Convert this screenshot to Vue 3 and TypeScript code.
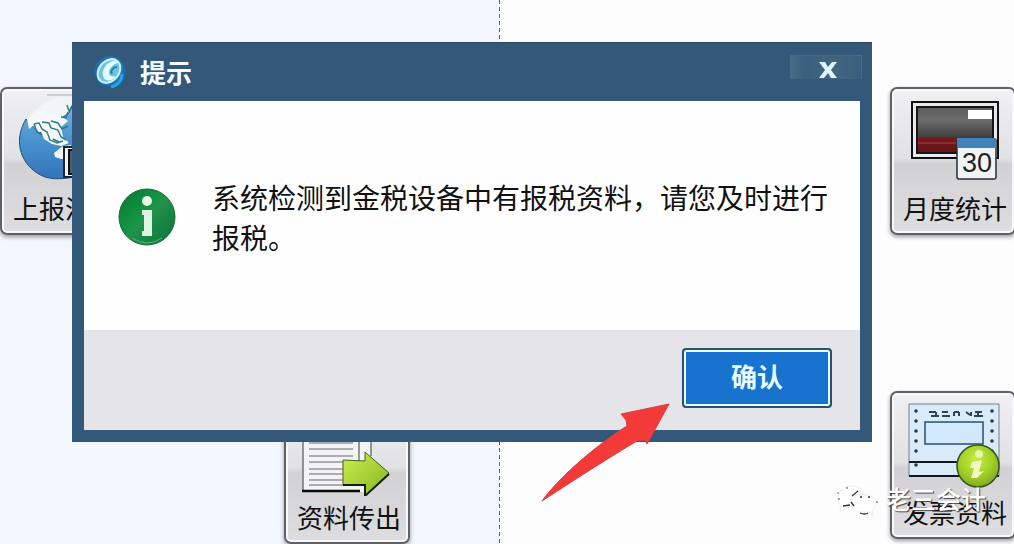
<script setup lang="ts">
import { ref } from 'vue'

const open = ref<boolean>(true)
const title = '提示'
const message = '系统检测到金税设备中有报税资料，请您及时进行报税。'
const holes: number[] = [10, 20, 30, 40, 50, 64]
const lines: number[] = [6, 13, 19, 26, 32, 39, 44, 50, 55]
</script>

<template>
  <main class="desk">
    <div class="pane pane-left"></div>
    <div class="pane pane-right"></div>

    <button type="button" class="tile tile-report">
      <svg class="pic" viewBox="0 0 100 90" aria-hidden="true">
        <defs>
          <linearGradient id="sea" x1="0" y1="0" x2="0" y2="1">
            <stop offset="0" stop-color="#7fb9dc" />
            <stop offset="0.5" stop-color="#4a94d0" />
            <stop offset="1" stop-color="#3474b8" />
          </linearGradient>
        </defs>
        <path d="M32 2H70" stroke="#a9adb8" />
        <path d="M12 26C20 16 30 8 44 4H80V70L46 80Z" fill="#f2f5f8" />
        <path d="M11 26C-1 46 4 68 22 80C34 88 46 86 60 84L80 30L62 6L56 14L54 20L48 24L46 32L34 36L24 40Z" fill="url(#sea)" stroke="#234f7c" />
        <path d="M12 26L14 36L20 31L26 38L29 46L37 51L46 53L54 50L48 44L46 34L53 28L46 22L34 22L28 18L18 20Z" fill="#f5faf9" />
        <path d="M19 31l5-1 3 6 5 3 3 8 7 3 6-2M19 31l3 8 5 3M27 29l7 1 2 5 7 2 3 7 5 3M36 28l7 2 4 6 6-3M46 24l5 1 2-6M52 12l2 6 4-5M38 46l6 3" fill="none" stroke="#2d7b8b" stroke-width="1.5" />
        <path d="M39 60l9-7 8-1v14l-10 0-6-2z" fill="#eff7fa" />
        <path d="M49 54H76V84H49Z" fill="#f3f3f5" stroke="#182334" stroke-width="2" />
        <path d="M54 57V81H70V57Z" fill="#555c64" stroke="#111" stroke-width="2" />
      </svg>
      <span class="label">上报汇总</span>
    </button>

    <button type="button" class="tile tile-month">
      <svg class="pic" viewBox="0 0 100 90" aria-hidden="true">
        <defs>
          <linearGradient id="screen" x1="0" y1="0" x2="0" y2="1">
            <stop offset="0" stop-color="#5c5c5c" />
            <stop offset="0.3" stop-color="#6c6c6c" />
            <stop offset="0.64" stop-color="#414141" />
            <stop offset="0.67" stop-color="#7a1a1c" />
            <stop offset="1" stop-color="#601418" />
          </linearGradient>
        </defs>
        <path d="M7 9H93V65H7Z" fill="#e9e9eb" stroke="#111" stroke-width="2" />
        <path d="M12 14H88V60H12Z" fill="url(#screen)" stroke="#151515" stroke-width="2" />
        <path d="M13 50H52" stroke="#a34042" />
        <path d="M63 17H87V26H63Z" fill="#fff" />
        <path d="M53 47H91V84Q91 86 89 86H54Q52 86 52 84V47Z" fill="#f2f3f5" stroke="#25303a" stroke-width="1.5" />
        <path d="M52 45H91V55H52Z" fill="#4083b9" />
        <text x="72" y="79" class="date">30</text>
      </svg>
      <span class="label">月度统计</span>
    </button>

    <button type="button" class="tile tile-export">
      <svg class="pic" viewBox="0 0 100 90" aria-hidden="true">
        <defs>
          <linearGradient id="lime" x1="0" y1="0" x2="1" y2="1">
            <stop offset="0" stop-color="#d1ed54" />
            <stop offset="1" stop-color="#83b71d" />
          </linearGradient>
        </defs>
        <path d="M4 2H72V86H4Z" fill="#f4f4f6" />
        <path d="M4 2V86M60 2V58M72 2V50" stroke="#333940" />
        <path v-for="y in lines" :key="y" :d="`M10 ${y + 24}H54`" stroke="#64676f" />
        <path d="M3 85H61" stroke="#080808" stroke-width="2.5" />
        <path d="M44 54L66 55V46L90 67L66 90V79H44Z" fill="url(#lime)" stroke="#40621a" />
        <path d="M44 79H66V90L90 68" fill="none" stroke="#142006" stroke-width="2" />
      </svg>
      <span class="label">资料传出</span>
    </button>

    <button type="button" class="tile tile-invoice">
      <svg class="pic" viewBox="0 0 100 90" aria-hidden="true">
        <defs>
          <radialGradient id="ball" cx="0.45" cy="0.35" r="0.65">
            <stop offset="0" stop-color="#c9ed3e" />
            <stop offset="0.6" stop-color="#a1cf28" />
            <stop offset="1" stop-color="#80ae21" />
          </radialGradient>
        </defs>
        <path d="M4 3H94V75H4Z" fill="#d9ebf8" />
        <path d="M4 75V3H94V75" fill="none" stroke="#71818d" />
        <path d="M4 61H94M4 75H94" stroke="#111a22" stroke-width="2" />
        <g fill="#233b4a">
          <circle v-for="y in holes" :key="y" cx="11" :cy="y" r="1.8" />
          <circle v-for="y in holes" :key="y" cx="87" :cy="y" r="1.8" />
        </g>
        <path d="M24 11h7M26 15h8M31 11v4M37 11h6M37 15h8M49 11v4M49 11h5M54 11v4M61 11l4 3M66 11v4M70 11h7M69 15h9M73 11v4" stroke="#294657" stroke-width="2" />
        <path d="M20 21H78V43H20Z" fill="#d2e9fc" stroke="#27506e" stroke-width="1.5" />
        <circle cx="73" cy="65" r="21" fill="url(#ball)" stroke="#38551e" stroke-width="1.5" />
        <circle cx="74" cy="53" r="4" fill="#e9f4ae" />
        <path d="M67 61L77 59L74 71L79 70L72 77L66 77L69 67L65 67Z" fill="#f1f6c3" />
      </svg>
      <span class="label">发票资料</span>
    </button>

    <section v-if="open" class="dialog" role="alertdialog" aria-labelledby="dlg-title" aria-describedby="dlg-text">
      <header class="bar">
        <svg class="logo" viewBox="0 0 36 36" aria-hidden="true">
          <defs>
            <radialGradient id="orb" cx="0.5" cy="0.45" r="0.6">
              <stop offset="0" stop-color="#37a3d8" />
              <stop offset="1" stop-color="#175a9a" />
            </radialGradient>
          </defs>
          <circle cx="18" cy="18" r="16" fill="url(#orb)" />
          <ellipse cx="17" cy="17" rx="13" ry="10" transform="rotate(-50 17 17)" fill="#6cc3dc" stroke="#c9f2fb" stroke-width="2" />
          <path d="M27 8C18 4 9 14 11 22C13 29 21 27 24 22C19 24 15 20 18 15C20 11 24 10 27 8Z" fill="#e3fbff" />
          <path d="M25 13C21 13 18 17 20 20" fill="none" stroke="#2c7db0" stroke-width="2" />
          <path d="M30 20C30 27 26 31 19 33" fill="none" stroke="#24a5e2" stroke-width="3" />
        </svg>
        <h1 id="dlg-title" class="title">{{ title }}</h1>
        <button type="button" class="close" aria-label="关闭" @click="open = false">
          <svg viewBox="0 0 20 18" aria-hidden="true">
            <path d="M1 1H7L10 6L14 1H19L13 9L19 17H13L10 12L6 17H1L7 9Z" fill="#dff5ff" />
          </svg>
        </button>
      </header>
      <div class="body">
        <svg class="info" viewBox="0 0 58 58" aria-hidden="true">
          <defs>
            <linearGradient id="green" x1="0" y1="0" x2="1" y2="1">
              <stop offset="0" stop-color="#087337" />
              <stop offset="0.4" stop-color="#109440" />
              <stop offset="0.5" stop-color="#22914b" />
              <stop offset="1" stop-color="#08743a" />
            </linearGradient>
          </defs>
          <circle cx="29" cy="29" r="28" fill="url(#green)" stroke="#146b38" />
          <path d="M14 50Q29 60 44 50" fill="none" stroke="#61b47e" />
          <circle cx="29" cy="13" r="5" fill="#e7f7e6" />
          <path d="M24 22H34V48H24V43H26V27H24Z" fill="#dff2df" />
        </svg>
        <p id="dlg-text" class="message">{{ message }}</p>
      </div>
      <footer class="foot">
        <button type="button" class="ok" @click="open = false">确认</button>
      </footer>
    </section>

    <svg class="pointer" viewBox="0 0 130 100" aria-hidden="true">
      <path d="M129 1L107 41L105 37L97 38C70 54 42 72 2 98C20 73 59 40 87 23L86 17L81 11Z" fill="#f43a38" stroke="#d93f43" stroke-linejoin="round" />
    </svg>

    <div class="mark">
      <svg class="chat" viewBox="0 0 42 32" aria-hidden="true">
        <path d="M5 22C-3 12 6 2 15 2C23 2 28 7 28 11C16 9 11 17 14 23L8 24L4 27Z" fill="#fff" stroke="#e6e6e8" stroke-width="0.7" />
        <path d="M28 11C12 10 11 27 25 28L33 28L37 31L36 26C46 18 37 11 28 11Z" fill="#fff" stroke="#e6e6e8" stroke-width="0.7" />
        <g fill="#34343a">
          <circle cx="11" cy="4" r="0.8" />
          <circle cx="2" cy="9" r="0.7" />
          <circle cx="3" cy="15" r="0.8" />
          <circle cx="25" cy="13" r="1" />
          <circle cx="33" cy="13" r="1" />
          <circle cx="41" cy="18" r="0.8" />
        </g>
        <path d="M7 22l7-1M16 12l6-5M24 29q5 2 8 0M15 18l3 4" fill="none" stroke="#34343a" stroke-width="1.3" />
      </svg>
      <span>老三会计</span>
    </div>
  </main>
</template>

<style>
body {
  margin: 0;
}
</style>

<style scoped>
.desk {
  position: relative;
  display: flex;
  min-height: 100vh;
  overflow: hidden;
  font-family: "Liberation Sans", "Noto Sans CJK SC", sans-serif;
  color: #111;
}
.pane-left {
  flex: 0 0 49.2%;
  background: #f2f6ff;
}
.pane-right {
  flex: 1;
  background:
    repeating-linear-gradient(to bottom, #5c5c66 0 4px, transparent 4px 7px) left / 1px 100% no-repeat,
    #fdfdfe;
}
button {
  font-family: inherit;
  cursor: pointer;
}
.tile {
  position: absolute;
  display: flex;
  flex-direction: column;
  align-items: center;
  justify-content: flex-end;
  box-sizing: border-box;
  width: 126px;
  height: 148px;
  padding: 0 0 4px 4px;
  border: 2px solid #606065;
  border-radius: 7px;
  background: linear-gradient(#f0f0f2 0, #e2e2e5 48%, #d2d2d5 52%, #dedee1 100%);
  box-shadow: inset 0 0 0 2px #f8f8fa, 0 2px 4px #9a9aa0;
  color: #111;
}
.pic {
  flex: none;
  width: 100px;
  height: 90px;
}
.date {
  font: 27px "Liberation Sans", sans-serif;
  text-anchor: middle;
  fill: #222;
}
.label {
  margin-top: 8px;
  font-size: 26px;
  line-height: 38px;
  white-space: nowrap;
}
.tile-report {
  top: 87px;
  left: 0;
}
.tile-month {
  top: 87px;
  right: -2px;
}
.tile-export {
  top: 396px;
  left: 284px;
}
.tile-invoice {
  top: 391px;
  right: -2px;
}
.tile-export .label,
.tile-invoice .label {
  margin-top: 4px;
}
.dialog {
  position: absolute;
  top: 42px;
  left: 72px;
  right: 142px;
  box-sizing: border-box;
  padding: 0 12px 12px;
  border: 1px solid #2b4a66;
  border-width: 1px 0 0;
  background: #33587a;
}
.bar {
  display: flex;
  align-items: center;
  height: 58px;
  padding-left: 8px;
}
.logo {
  width: 36px;
  height: 36px;
}
.title {
  flex: 1;
  margin: 4px 0 0 12px;
  font-size: 26px;
  line-height: 36px;
  font-weight: 700;
  color: #f3fbff;
}
.close {
  display: flex;
  align-items: center;
  justify-content: center;
  align-self: flex-start;
  width: 72px;
  height: 24px;
  margin-top: 12px;
  margin-right: -2px;
  padding: 0 0 0 4px;
  border: 1px solid #466b86;
  border-bottom: 0;
  background: linear-gradient(to right, #466b88, #385f7e 20%, #41677e 60%, #385f7e);
}
.close svg {
  width: 20px;
  height: 18px;
  margin-top: 4px;
}
.body {
  display: flex;
  align-items: center;
  min-height: 229px;
  padding: 2px 31px 0 34px;
  box-sizing: border-box;
  background: #fefefe;
}
.info {
  flex: none;
  width: 58px;
  height: 58px;
}
.message {
  flex: 1;
  margin: 6px 0 0 36px;
  font-size: 28px;
  line-height: 40px;
}
.foot {
  display: flex;
  justify-content: flex-end;
  padding: 18px 28px 22px;
  background: #e5e5e9;
}
.ok {
  width: 150px;
  height: 60px;
  padding: 0;
  border: 2px solid #23566d;
  border-radius: 4px;
  background: #1873cf;
  box-shadow: inset 0 0 0 2px #effcff;
  font-size: 26px;
  line-height: 36px;
  font-weight: 700;
  color: #e9faff;
}
.pointer {
  position: absolute;
  top: 403px;
  left: 540px;
  width: 130px;
  height: 100px;
  pointer-events: none;
}
.mark {
  position: absolute;
  right: 28px;
  bottom: 26px;
  display: flex;
  align-items: center;
  gap: 8px;
  font-size: 25px;
  line-height: 36px;
  font-weight: 500;
  color: #fff;
  text-shadow: 1px 1px 1px #44444a;
  pointer-events: none;
}
.chat {
  width: 42px;
  height: 32px;
}
</style>
